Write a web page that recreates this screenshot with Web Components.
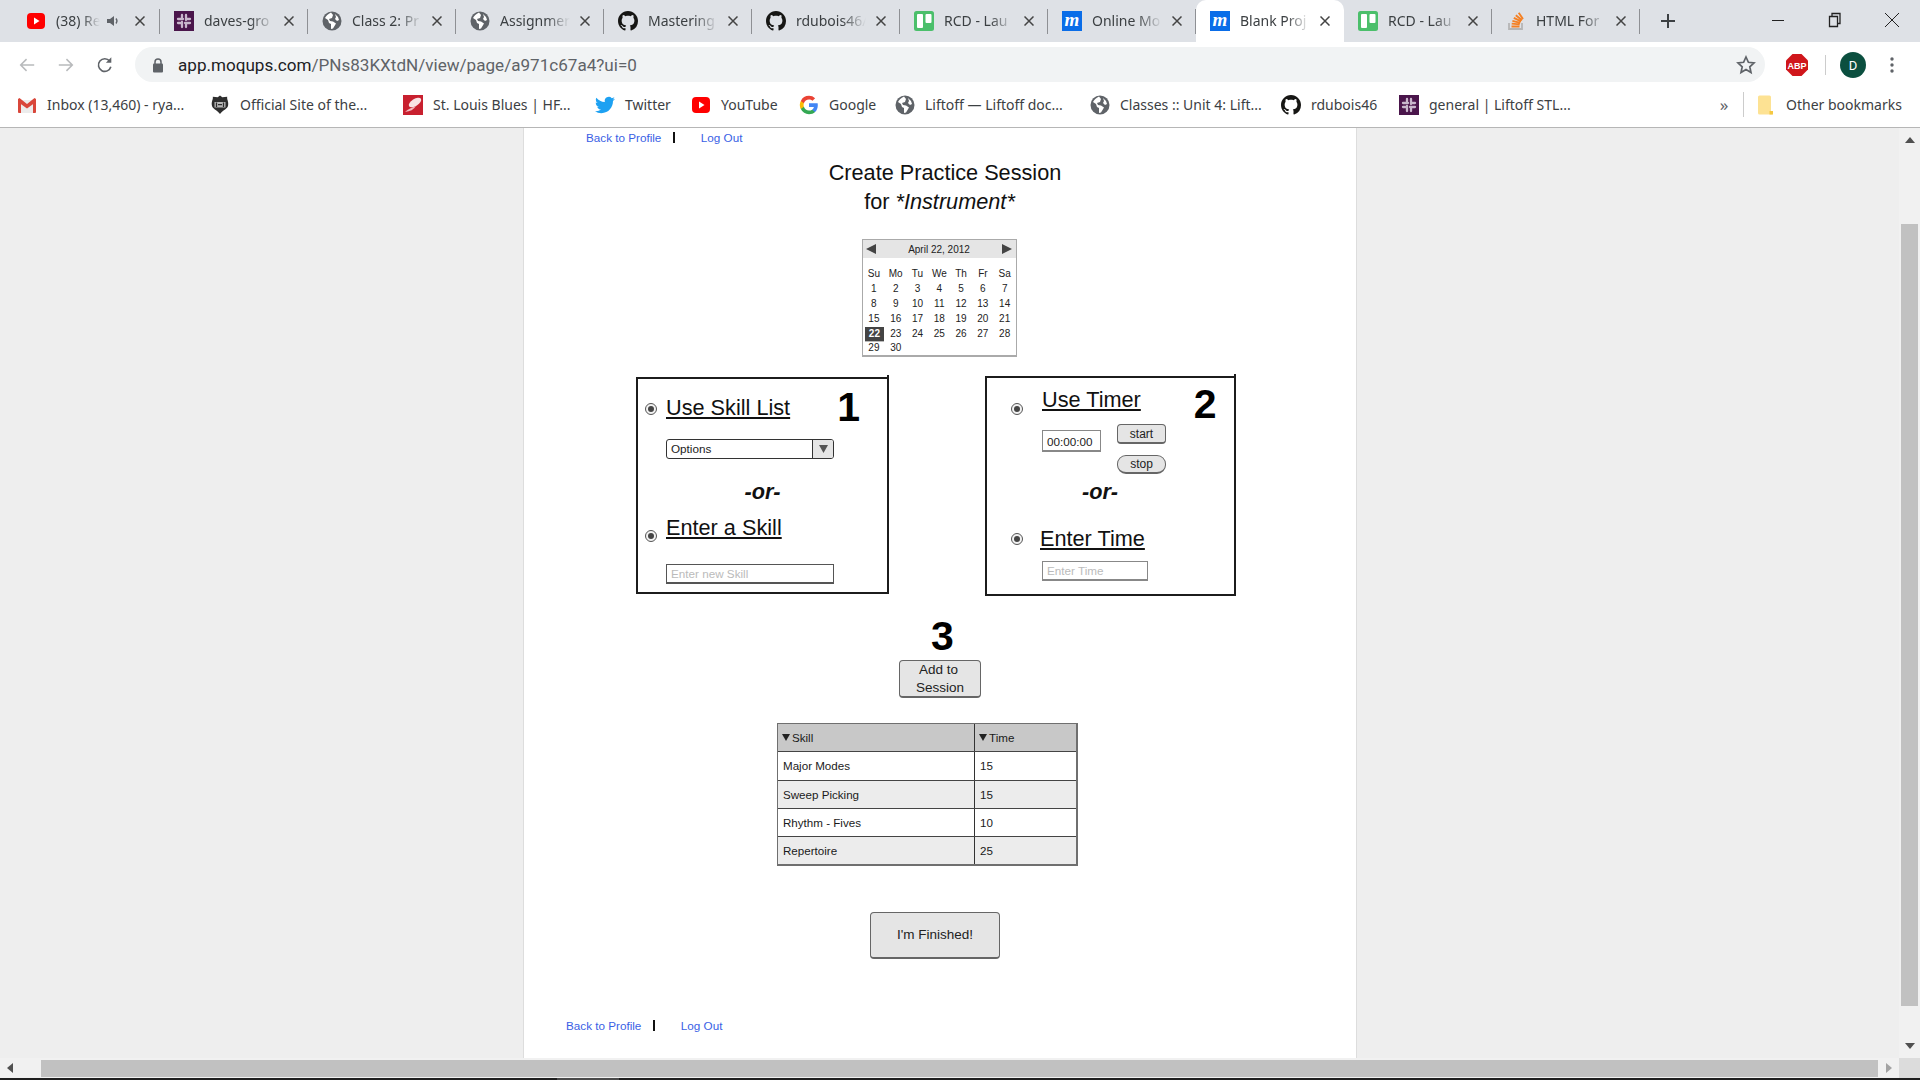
<!DOCTYPE html>
<html lang="en">
<head>
<meta charset="utf-8">
<title>Create Practice Session</title>
<style>
  html, body { margin: 0; height: 100%; overflow: hidden; background: #eee; }
  body { font-family: "Liberation Sans", Arial, sans-serif; }
</style>
</head>
<body>

<chrome-window>
  <tab-strip slot="tabs">
    <browser-tab icon="youtube" audio>(38) Re</browser-tab>
    <browser-tab icon="slack">daves-gro</browser-tab>
    <browser-tab icon="globe">Class 2: Pr</browser-tab>
    <browser-tab icon="globe">Assignmer</browser-tab>
    <browser-tab icon="github">Mastering</browser-tab>
    <browser-tab icon="github">rdubois46/</browser-tab>
    <browser-tab icon="trello">RCD - Lau</browser-tab>
    <browser-tab icon="moqups">Online Mo</browser-tab>
    <browser-tab icon="moqups" active>Blank Proj</browser-tab>
    <browser-tab icon="trello">RCD - Lau</browser-tab>
    <browser-tab icon="stack">HTML For</browser-tab>
  </tab-strip>
  <address-bar slot="toolbar"></address-bar>
  <bookmarks-bar slot="bookmarks">
    <bookmark-item icon="gmail" width="193">Inbox (13,460) - rya...</bookmark-item>
    <bookmark-item icon="nhl" width="193">Official Site of the...</bookmark-item>
    <bookmark-item icon="blues" width="192">St. Louis Blues | HF...</bookmark-item>
    <bookmark-item icon="twitter" width="96">Twitter</bookmark-item>
    <bookmark-item icon="youtube" width="108">YouTube</bookmark-item>
    <bookmark-item icon="google" width="96">Google</bookmark-item>
    <bookmark-item icon="globe" width="195">Liftoff — Liftoff doc...</bookmark-item>
    <bookmark-item icon="globe" width="191">Classes :: Unit 4: Lift...</bookmark-item>
    <bookmark-item icon="github" width="118">rdubois46</bookmark-item>
    <bookmark-item icon="slack" width="300">general | Liftoff STL...</bookmark-item>
  </bookmarks-bar>

  <mock-page>
    <nav-links style="--left: 62px; --pad-top: 0px">
      <a>Back to Profile</a>
    </nav-links>

    <page-title>Create Practice Session<br><span style="margin-right: 11px">for <i>*Instrument*</i></span></page-title>
    <mini-calendar></mini-calendar>

    <panel-row>
      <mock-panel style="--w: 253px; --h: 217px; margin-top: 1px">
        <option-head number="1" style="--row-h: 57px; --radio-left: 7px; --gap: 9px; --radio-top: 24px; --text-top: 16px; --num-top: 5px; --num-gap: 47px">Use Skill List</option-head>
        <mock-select style="margin: 3px 0 0 28px"></mock-select>
        <or-label style="margin-top: 20px; width: 249px"></or-label>
        <option-head style="margin-top: 10px; --row-h: 26px; --radio-left: 7px; --gap: 9px; --radio-top: 15px; --text-top: 0px">Enter a Skill</option-head>
        <mock-input placeholder="Enter new Skill" style="margin: 23px 0 0 28px; --w: 168px; --h: 20px; --bc: #555"></mock-input>
      </mock-panel>

      <mock-panel style="--w: 251px; --h: 220px; margin-left: 96px">
        <option-head number="2" style="--row-h: 46px; --radio-left: 24px; --gap: 19px; --radio-top: 25px; --text-top: 9px; --num-top: 3px; --num-gap: 53px">Use Timer</option-head>
        <timer-row></timer-row>
        <or-label style="margin-top: 5px; width: 226px"></or-label>
        <option-head style="margin-top: 21px; --row-h: 26px; --radio-left: 24px; --gap: 17px; --radio-top: 7px; --text-top: 0px">Enter Time</option-head>
        <mock-input placeholder="Enter Time" style="margin: 9px 0 0 55px; --w: 106px; --h: 20px; --bc: #888"></mock-input>
      </mock-panel>
    </panel-row>

    <add-section></add-section>

    <session-table>
      <session-row head><span>Skill</span><span>Time</span></session-row>
      <session-row><span>Major Modes</span><span>15</span></session-row>
      <session-row alt><span>Sweep Picking</span><span>15</span></session-row>
      <session-row><span>Rhythm - Fives</span><span>10</span></session-row>
      <session-row alt><span>Repertoire</span><span>25</span></session-row>
    </session-table>

    <mock-button style="--w: 130px; --h: 47px; --fs: 13.5px; margin: 46px 0 0 346px">I'm Finished!</mock-button>

    <nav-links style="--left: 42px; --pad-top: 57px">
      <a>Back to Profile</a>
    </nav-links>
  </mock-page>
</chrome-window>

<script>
// icons used by the tabs, the bookmarks bar and the toolbar
const GITHUB_PATH = 'M8 0C3.58 0 0 3.58 0 8c0 3.54 2.29 6.53 5.47 7.59.4.07.55-.17.55-.38 0-.19-.01-.82-.01-1.49-2.01.37-2.53-.49-2.69-.94-.09-.23-.48-.94-.82-1.13-.28-.15-.68-.52-.01-.53.63-.01 1.08.58 1.23.82.72 1.21 1.87.87 2.33.66.07-.52.28-.87.51-1.07-1.78-.2-3.64-.89-3.64-3.95 0-.87.31-1.59.82-2.15-.08-.2-.36-1.02.08-2.12 0 0 .67-.21 2.2.82.64-.18 1.32-.27 2-.27s1.36.09 2 .27c1.53-1.04 2.2-.82 2.2-.82.44 1.1.16 1.92.08 2.12.51.56.82 1.27.82 2.15 0 3.07-1.87 3.75-3.65 3.95.29.25.54.73.54 1.48 0 1.07-.01 1.93-.01 2.2 0 .21.15.46.55.38A8.01 8.01 0 0 0 16 8c0-4.42-3.58-8-8-8z';

const ICONS = {
  youtube: `<svg viewBox="0 0 20 20"><rect x="1" y="2" width="18" height="16" rx="4" fill="#f00"/><path d="M8 6.500l5.500 3.500L8 13.500z" fill="#fff"/></svg>`,
  slack: `<svg viewBox="0 0 20 20"><rect width="20" height="20" fill="#4a154b"/><g stroke="#c9b7cc" stroke-width="2.300" stroke-linecap="round"><path d="M8 4v3.800M4 12h3.800M12 16v-3.800M16 8h-3.800M12 4v5M4 8h5M8 16v-5M16 12h-5"/></g></svg>`,
  globe: `<svg viewBox="0 0 20 20"><circle cx="10" cy="10" r="9.500" fill="#5f6368"/><path d="M9 1.500C6 3 4 5 3 7l3 2 1 3 2 1v5l2-.5 3-5-3-2-3-.5-1-2 3-1 1-3zM13 3l3 3 1 3-2 1-2-2 1-2z" fill="#fff"/></svg>`,
  github: `<svg viewBox="0 0 16 16"><path fill="#161614" d="${GITHUB_PATH}"/></svg>`,
  trello: `<svg viewBox="0 0 20 20"><rect width="20" height="20" rx="2.500" fill="#4bbf6b"/><rect x="3" y="3" width="6" height="14" rx="1" fill="#fff"/><rect x="11.500" y="3" width="6" height="9" rx="1" fill="#fff"/></svg>`,
  moqups: `<svg viewBox="0 0 20 20"><rect width="20" height="20" fill="#0a6de8"/><text x="10" y="15" text-anchor="middle" font-family="Liberation Serif" font-style="italic" font-weight="700" font-size="19" fill="#fff">m</text></svg>`,
  stack: `<svg viewBox="0 0 20 20"><path d="M3 12v6h13v-6" fill="none" stroke="#b5b5b5" stroke-width="1.800"/><g stroke="#f48024" stroke-width="1.900"><path d="M5.500 15.500h8M5.700 12.600l8 .8M6.400 9.800l7.900 2M7.800 6.900l7.300 3.500M9.800 4.200l6.300 5M12.700 1.800l4.300 6.200"/></g></svg>`,
  gmail: `<svg viewBox="0 0 20 20"><path d="M1 5h18v12a1 1 0 0 1-1 1H2a1 1 0 0 1-1-1z" fill="#ececec"/><path d="M2.500 3L10 9l7.500-6 1.500 1v3l-9 6.500L1 7V4z" fill="#d9473b"/><path d="M1 6l3 2.200V18H2a1 1 0 0 1-1-1zM19 6l-3 2.200V18h2a1 1 0 0 0 1-1z" fill="#d9473b"/></svg>`,
  nhl: `<svg viewBox="0 0 20 20"><path d="M10 .500l2.300 1.800 4.900-.5c-.5 2.700 1.600 4.700.9 8.700-.7 3.300-4.600 4.300-8.100 8.500-3.500-4.200-7.400-5.200-8.100-8.500-.7-4 1.400-6 .9-8.700l4.900.5z" fill="#2e2e2e"/><path d="M4.500 7h11v5.500h-11z" fill="#b9b9b9"/><path d="M6.500 7.500v4.500M13.500 7.500v4.500M8 9.700h4" stroke="#2e2e2e" stroke-width="1.300"/></svg>`,
  blues: `<svg viewBox="0 0 20 20"><rect width="20" height="20" fill="#c8202f"/><ellipse cx="12" cy="7.500" rx="7" ry="3.500" transform="rotate(-32 12 7.500)" fill="#f9e3e5"/><path d="M2 17c3-3 7-4.500 11-6-2 3.500-6 5.500-11 6z" fill="#f3b9bf"/></svg>`,
  twitter: `<svg viewBox="0 0 24 24"><path fill="#1da1f2" d="M23.950 4.570a10 10 0 0 1-2.820.77 4.960 4.960 0 0 0 2.160-2.720 9.900 9.900 0 0 1-3.120 1.180 4.920 4.920 0 0 0-8.380 4.480C7.690 8.100 4.070 6.130 1.640 3.160a4.820 4.820 0 0 0-.66 2.470 4.900 4.900 0 0 0 2.180 4.090 4.900 4.900 0 0 1-2.230-.61v.06a4.920 4.920 0 0 0 3.950 4.830 5 5 0 0 1-2.210.08 4.940 4.940 0 0 0 4.600 3.420A9.870 9.870 0 0 1 0 19.540a14 14 0 0 0 7.560 2.210c9.050 0 14-7.500 14-13.980 0-.21 0-.42-.02-.63a9.940 9.940 0 0 0 2.460-2.550z"/></svg>`,
  google: `<svg viewBox="0 0 24 24"><path fill="#4285f4" d="M22.560 12.250c0-.78-.07-1.530-.2-2.250H12v4.260h5.920a5.060 5.060 0 0 1-2.200 3.320v2.770h3.570c2.080-1.920 3.270-4.740 3.270-8.100z"/><path fill="#34a853" d="M12 23c2.970 0 5.460-.98 7.280-2.660l-3.570-2.770c-.98.660-2.230 1.060-3.710 1.060-2.860 0-5.290-1.930-6.160-4.530H2.180v2.840A11 11 0 0 0 12 23z"/><path fill="#fbbc05" d="M5.840 14.090a6.600 6.600 0 0 1 0-4.180V7.070H2.180a11 11 0 0 0 0 9.860z"/><path fill="#ea4335" d="M12 5.380c1.620 0 3.060.56 4.210 1.640l3.150-3.150A10.960 10.960 0 0 0 12 1 11 11 0 0 0 2.180 7.070l3.660 2.840C6.710 7.310 9.140 5.380 12 5.380z"/></svg>`,
};

function defineShadow(name, css, html) {
  customElements.define(name, class extends HTMLElement {
    constructor() {
      super();
      this.attachShadow({ mode: 'open' });
    }
    connectedCallback() {
      const body = typeof html === 'function' ? html(this) : html;
      this.shadowRoot.innerHTML = `<style>${css}</style>${body}`;
    }
  });
}

// ---------- browser chrome ----------
defineShadow('chrome-window', `
  :host { display: grid; grid-template-rows: 42px 46px 40px 930px 20px 2px; height: 1080px; width: 1920px; overflow: hidden; }
  .main { display: flex; min-height: 0; }
  .page { width: 1899px; overflow: hidden; background: #eee; }
  .hbar { display: flex; background: #f1f1f1; }
  .hbar .arrow { width: 34px; padding-left: 7px; display: flex; align-items: center; }
  .hbar .thumb { width: 1837px; margin: 2px 0 1px; background: #c1c1c1; }
  .hbar .end { width: 21px; display: flex; align-items: center; justify-content: center; }
  .hbar .corner { width: 21px; background: #dcdcdc; }
  .taskbar { display: flex; background: #1f1f1f; }
  .taskbar i { display: block; width: 62px; margin-left: 557px; background: #4a4a4a; }
  .vbar { width: 21px; background: #f1f1f1; display: flex; flex-direction: column; align-items: center; }
  .vbar .up, .vbar .down { height: 96px; width: 100%; display: flex; justify-content: center; }
  .vbar .up svg { margin-top: 9px; }
  .vbar .down { height: 52px; align-items: flex-end; }
  .vbar .down svg { margin-bottom: 9px; }
  .vbar .thumb { width: 17px; height: 782px; background: #c1c1c1; }
`, `
  <slot name="tabs"></slot>
  <slot name="toolbar"></slot>
  <slot name="bookmarks"></slot>
  <div class="main">
    <div class="page"><slot></slot></div>
    <div class="vbar">
      <div class="up"><svg width="10" height="6" viewBox="0 0 10 6"><path d="M5 0l5 6H0z" fill="#505050"/></svg></div>
      <div class="thumb"></div>
      <div class="down"><svg width="10" height="6" viewBox="0 0 10 6"><path d="M0 0h10L5 6z" fill="#505050"/></svg></div>
    </div>
  </div>
  <div class="hbar">
    <div class="arrow"><svg width="6" height="10" viewBox="0 0 6 10"><path d="M6 0v10L0 5z" fill="#505050"/></svg></div>
    <div class="thumb"></div>
    <div class="end"><svg width="6" height="10" viewBox="0 0 6 10"><path d="M0 0l6 5-6 5z" fill="#a3a3a3"/></svg></div>
    <div class="corner"></div>
  </div>
  <div class="taskbar"><i></i></div>
`);

defineShadow('tab-strip', `
  :host { display: flex; background: #dee1e6; height: 42px; padding-left: 12px; box-sizing: border-box; color: #3c4043; }
  .tabs { display: flex; width: 1630px; }
  .plus { width: 52px; display: flex; align-items: center; justify-content: center; }
  .controls { margin-left: auto; display: flex; }
  .controls div { width: 57px; display: flex; align-items: center; justify-content: center; height: 40px; }
`, `
  <div class="tabs"><slot></slot></div>
  <div class="plus"><svg width="16" height="16" viewBox="0 0 16 16"><path d="M8 1v14M1 8h14" stroke="#3c4043" stroke-width="2"/></svg></div>
  <div class="controls">
    <div><svg width="14" height="14" viewBox="0 0 14 14"><path d="M1 7.500h12" stroke="#222" stroke-width="1"/></svg></div>
    <div><svg width="14" height="16" viewBox="0 0 14 16"><path d="M1.500 4.500h8v10h-8zM4 4.500v-3h8v10h-2.500" fill="none" stroke="#222" stroke-width="1.300"/></svg></div>
    <div><svg width="16" height="16" viewBox="0 0 16 16"><path d="M1 1l14 14M15 1L1 15" stroke="#222" stroke-width="1"/></svg></div>
  </div>
`);

defineShadow('browser-tab', `
  :host { display: flex; align-items: center; position: relative; width: 148px; height: 42px; box-sizing: border-box; padding: 0 0 0 14px; font: 14px/20px "Noto Sans", sans-serif; }
  :host([active]) { background: #fff; border-radius: 10px 10px 0 0; }
  :host(:not([active])):after { content: ""; position: absolute; right: 0; top: 9px; height: 25px; width: 1px; background: #8e9094; }
  .ico { width: 20px; height: 20px; flex: none; }
  .ico svg { display: block; width: 20px; height: 20px; }
  .title { margin-left: 10px; white-space: nowrap; flex: none; width: 80px; -webkit-mask-image: linear-gradient(to right, #000 46px, transparent 70px); mask-image: linear-gradient(to right, #000 46px, transparent 70px); }
  .audio .title { width: 52px; -webkit-mask-image: linear-gradient(to right, #000 26px, transparent 44px); mask-image: linear-gradient(to right, #000 26px, transparent 44px); }
  .spk { margin-left: -3px; width: 18px; flex: none; }
  .close { flex: none; margin-left: 0; width: 10px; height: 10px; }
  .audio .close { margin-left: 12px; }
  .wrap { display: flex; align-items: center; }
`, el => `
  <div class="wrap ${el.hasAttribute('audio') ? 'audio' : ''}">
    <div class="ico">${ICONS[el.getAttribute('icon')]}</div>
    <div class="title"><slot></slot></div>
    ${el.hasAttribute('audio') ? `<svg class="spk" width="18" height="14" viewBox="0 0 18 14"><path d="M2 5h3l4-3v10L5 9H2z" fill="#5f6368"/><path d="M11 4.500c1.200 1.500 1.200 3.500 0 5" fill="none" stroke="#5f6368" stroke-width="1.300"/></svg>` : ''}
    <svg class="close" viewBox="0 0 10 10"><path d="M.5.500l9 9M9.500.500l-9 9" stroke="#444" stroke-width="1.500"/></svg>
  </div>
`);

defineShadow('address-bar', `
  :host { display: flex; align-items: center; height: 46px; background: #fff; font-family: Roboto, sans-serif; }
  .nav { display: flex; width: 135px; padding-left: 18px; box-sizing: border-box; }
  .nav svg { margin-right: 21px; }
  .omni { width: 1630px; height: 35px; margin-top: -1px; border-radius: 18px; background: #f1f3f4; display: flex; align-items: center; box-sizing: border-box; padding-left: 17px; font-size: 17.08px; color: #5f6368; }
  .omni b { font-weight: 400; color: #202124; }
  .omni .url { margin-left: 14px; }
  .star { margin-left: auto; margin-right: 9px; }
  .abp { margin-left: 21px; width: 22px; height: 22px; }
  .sep { margin-left: 17px; width: 1px; height: 20px; background: #ccc; }
  .avatar { margin-left: 14px; width: 26px; height: 26px; border-radius: 50%; background: #0b4f3f; color: #fff; font-size: 13px; display: flex; align-items: center; justify-content: center; }
  .dots { margin-left: 24px; }
`, `
  <div class="nav">
    <svg width="20" height="20" viewBox="0 0 20 20"><path d="M18 10H3M9.500 3.500L3 10l6.500 6.500" fill="none" stroke="#b8babc" stroke-width="1.700"/></svg>
    <svg width="20" height="20" viewBox="0 0 20 20"><path d="M2 10h15M10.500 3.500L17 10l-6.500 6.500" fill="none" stroke="#b8babc" stroke-width="1.700"/></svg>
    <svg width="20" height="20" viewBox="0 0 20 20"><path d="M16.500 12a7 7 0 1 1-1.300-6.300" fill="none" stroke="#5f6368" stroke-width="1.800"/><path d="M17 1.500v6h-6z" fill="#5f6368"/></svg>
  </div>
  <div class="omni">
    <svg width="12" height="16" viewBox="0 0 12 16"><path d="M3 7V5a3 3 0 0 1 6 0v2" fill="none" stroke="#5f6368" stroke-width="1.500"/><rect x="1" y="6.500" width="10" height="9" rx="1" fill="#5f6368"/></svg>
    <span class="url"><b>app.moqups.com</b>/PNs83KXtdN/view/page/a971c67a4?ui=0</span>
    <svg class="star" width="20" height="20" viewBox="0 0 20 20"><path d="M10 2l2.400 5.300 5.600.6-4.200 3.900 1.200 5.700-5-2.900-5 2.900 1.200-5.700L2 7.900l5.600-.6z" fill="none" stroke="#5f6368" stroke-width="1.700"/></svg>
  </div>
  <svg class="abp" viewBox="0 0 22 22"><path d="M6.500 0h9L22 6.500v9L15.500 22h-9L0 15.500v-9z" fill="#d0161b"/><text x="11" y="14.500" text-anchor="middle" font-family="Liberation Sans" font-weight="700" font-size="9" fill="#fff">ABP</text></svg>
  <div class="sep"></div>
  <div class="avatar">D</div>
  <svg class="dots" width="4" height="16" viewBox="0 0 4 16"><g fill="#5f6368"><circle cx="2" cy="2" r="1.700"/><circle cx="2" cy="8" r="1.700"/><circle cx="2" cy="14" r="1.700"/></g></svg>
`);

defineShadow('bookmarks-bar', `
  :host { display: flex; align-items: center; height: 40px; box-sizing: border-box; background: #fff; border-bottom: 1px solid #b6b6b6; padding: 0 0 6px 17px; font: 14px/20px "Noto Sans", sans-serif; color: #3c4043; }
  .list { display: flex; width: 1694px; }
  .more { width: 26px; margin-right: 6px; display: flex; justify-content: center; color: #5f6368; font-size: 17px; }
  .sep { width: 1px; height: 25px; background: #ccc; }
  .other { display: flex; align-items: center; margin-left: 14px; white-space: nowrap; }
  .other span { margin-left: 13px; }
`, `
  <div class="list"><slot></slot></div>
  <div class="more">»</div>
  <div class="sep"></div>
  <div class="other">
    <svg width="15" height="20" viewBox="0 0 15 20"><path d="M0 2a1.500 1.500 0 0 1 1.500-1.500h10A1.500 1.500 0 0 1 13 2v14.500h2V18a1.500 1.500 0 0 1-1.500 1.500h-12A1.500 1.500 0 0 1 0 18z" fill="#fde293"/><path d="M11.500 16h3.500v3.500h-3.500z" fill="#f5c842"/></svg>
    <span>Other bookmarks</span>
  </div>
`);

defineShadow('bookmark-item', `
  :host { display: flex; align-items: center; flex: none; white-space: nowrap; }
  .ico { width: 20px; height: 20px; flex: none; margin-right: 10px; }
  .ico svg { display: block; width: 20px; height: 20px; }
`, el => {
  el.style.width = el.getAttribute('width') + 'px';
  return `<div class="ico">${ICONS[el.getAttribute('icon')]}</div><slot></slot>`;
});

// ---------- the wireframe itself ----------
defineShadow('mock-page', `
  :host { display: block; width: 834px; height: 930px; margin-left: 523px; box-sizing: border-box; background: #fff; border-left: 1px solid #ddd; border-right: 1px solid #ddd; overflow: hidden; }
`, `<slot></slot>`);

defineShadow('nav-links', `
  :host { display: flex; align-items: center; height: 18px; padding-left: var(--left); padding-top: var(--pad-top); font-size: 11.7px; color: #3a5fe5; }
  .bar { margin-left: 12px; width: 1.5px; height: 11px; background: #111; }
  .log { margin-left: 26px; }
`, `
  <slot></slot>
  <span class="bar"></span>
  <span class="log">Log Out</span>
`);

defineShadow('page-title', `
  :host { display: block; width: 400px; margin: 12px 0 0 221px; text-align: center; font-size: 21.7px; line-height: 29px; color: #111; }
`, `<slot></slot>`);

defineShadow('mini-calendar', `
  :host { display: block; width: 155px; height: 118px; margin: 23px 0 0 338px; box-sizing: border-box; border: 1px solid #aaa; border-bottom-width: 2px; font-size: 10px; color: #222; }
  .head { display: flex; align-items: center; justify-content: space-between; height: 18px; padding: 0 4px 0 3px; background: #e5e5e5; }
  .grid { display: grid; grid-template-columns: repeat(7, 21.8px); grid-auto-rows: 14.900px; margin: 9px 0 0 0; text-align: center; line-height: 14px; }
  .sel { background: #444; color: #fff; font-weight: 700; margin: 0 1px 0 2px; box-shadow: 0 1px 0 #bbb; }
`, () => {
  const names = ['Su', 'Mo', 'Tu', 'We', 'Th', 'Fr', 'Sa'].map(d => `<div>${d}</div>`).join('');
  let days = '';
  for (let d = 1; d <= 30; d++) days += `<div class="${d === 22 ? 'sel' : ''}">${d}</div>`;
  return `
    <div class="head">
      <svg width="10" height="10" viewBox="0 0 10 10"><path d="M10 0v10L0 5z" fill="#444"/></svg>
      <span>April 22, 2012</span>
      <svg width="10" height="10" viewBox="0 0 10 10"><path d="M0 0l10 5-10 5z" fill="#444"/></svg>
    </div>
    <div class="grid">${names}${days}</div>`;
});

defineShadow('panel-row', `
  :host { display: flex; align-items: flex-start; margin: 19px 0 0 112px; }
`, `<slot></slot>`);

defineShadow('mock-panel', `
  :host { display: block; position: relative; box-sizing: border-box; width: var(--w); height: var(--h); border: 2px solid #1c1c1c; }
  .tick { position: absolute; right: -2px; top: -4px; width: 2px; height: 2px; background: #1c1c1c; }
`, `<div class="tick"></div><slot></slot>`);

defineShadow('option-head', `
  :host { display: flex; align-items: flex-start; height: var(--row-h); padding-left: var(--radio-left); color: #111; }
  .radio { box-sizing: border-box; width: 12px; height: 12px; margin-top: var(--radio-top); margin-right: var(--gap); flex: none; border: 1px solid #555; border-radius: 50%; display: flex; align-items: center; justify-content: center; background: #f2f2f2; }
  .radio i { width: 6px; height: 6px; border-radius: 50%; background: #444; }
  .text { margin-top: var(--text-top); font-size: 21.7px; line-height: 26px; text-decoration: underline; white-space: nowrap; }
  .num { margin-top: var(--num-top); margin-left: var(--num-gap); font-size: 41px; line-height: 46px; font-weight: 700; color: #000; }
`, el => `
  <div class="radio"><i></i></div>
  <div class="text"><slot></slot></div>
  ${el.hasAttribute('number') ? `<div class="num">${el.getAttribute('number')}</div>` : ''}
`);

defineShadow('mock-select', `
  :host { display: flex; box-sizing: border-box; width: 168px; height: 20px; border: 1px solid #333; border-radius: 3px; font-size: 11.7px; color: #222; overflow: hidden; }
  .val { flex: 1; padding-left: 4px; line-height: 18px; }
  .btn { width: 20px; background: #e5e5e5; border-left: 1px solid #333; display: flex; align-items: center; justify-content: center; }
`, `
  <div class="val">Options</div>
  <div class="btn"><svg width="9" height="8" viewBox="0 0 9 8"><path d="M0 0h9L4.500 8z" fill="#555"/></svg></div>
`);

defineShadow('mock-input', `
  :host { display: block; box-sizing: border-box; width: var(--w); height: var(--h); border: 1px solid var(--bc); border-bottom-width: 2px; padding-left: 4px; font-size: 11.7px; line-height: var(--lh, 17px); color: var(--fg, #bbb); }
`, el => el.getAttribute('placeholder'));

defineShadow('or-label', `
  :host { display: block; height: 26px; text-align: center; font: italic 700 21.7px/26px "Liberation Sans", sans-serif; color: #111; }
`, `-or-`);

defineShadow('timer-row', `
  :host { display: flex; align-items: flex-start; height: 50px; margin-left: 55px; }
  mock-input { margin-top: 6px; }
  .btns { display: flex; flex-direction: column; margin-left: 16px; }
`, `
  <mock-input placeholder="00:00:00" style="--w: 59px; --h: 22px; --bc: #888; --fg: #222; --lh: 21px"></mock-input>
  <div class="btns">
    <mock-button style="--w: 49px; --h: 20px; --fs: 12px; --lh: 18px">start</mock-button>
    <mock-button style="--w: 49px; --h: 19px; --fs: 12px; --lh: 17px; --r: 9px; margin-top: 11px">stop</mock-button>
  </div>
`);

defineShadow('mock-button', `
  :host { display: flex; align-items: center; justify-content: center; box-sizing: border-box; width: var(--w); height: var(--h); border: 1px solid #666; border-bottom-width: 2px; border-radius: var(--r, 4px); background: #e5e5e5; font-size: var(--fs); line-height: var(--lh, 18px); color: #222; text-align: center; }
`, `<span><slot></slot></span>`);

defineShadow('add-section', `
  :host { display: block; margin: 17px 0 0 375px; }
  .num { margin-left: 32px; font-size: 41px; line-height: 46px; font-weight: 700; color: #000; height: 47px; }
`, `
  <div class="num">3</div>
  <mock-button style="--w: 82px; --h: 38px; --fs: 13.5px"><span style="margin-right: 3px">Add to</span><br>Session</mock-button>
`);

defineShadow('session-table', `
  :host { display: block; box-sizing: border-box; width: 301px; margin: 25px 0 0 253px; border: 1px solid #6f6f6f; border-bottom-width: 2px; border-right-width: 2px; font-size: 11.6px; color: #1a1a1a; }
`, `<slot></slot>`);

defineShadow('session-row', `
  :host { display: grid; grid-template-columns: 197px 1fr; height: 27.300px; box-sizing: content-box; border-bottom: 1px solid #444; background: #fff; }
  :host([alt]) { background: #ececec; }
  :host([head]) { background: #c8c8c8; }
  :host(:last-child) { border-bottom: 0; }
  ::slotted(span) { display: flex; align-items: center; padding-left: 4px; }
  ::slotted(span:first-child) { border-right: 1px solid #333; }
`, el => `${el.hasAttribute('head') ? `<style>::slotted(span) { padding-bottom: 1px; } ::slotted(span)::before { content: ""; width: 0; height: 0; border: 4px solid transparent; border-top: 7px solid #222; border-bottom: 0; margin: 1px 2px 0 0; }</style>` : `<style>::slotted(span) { padding-left: 5px; }</style>`}<slot></slot>`);
</script>
</body>
</html>
